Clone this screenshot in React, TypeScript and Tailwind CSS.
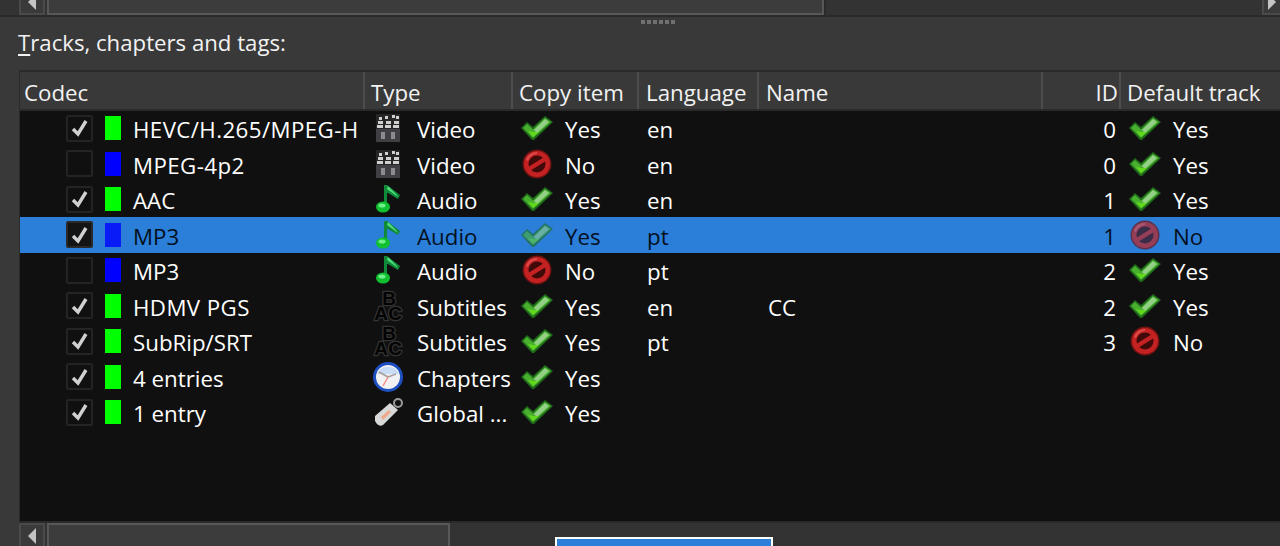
import React from 'react';

const FONT = "font-['Open_Sans','Noto_Sans',sans-serif]";

const columns = [
  { name: 'Codec', w: 'w-[345px]', align: 'pl-[4px]' },
  { name: 'Type', w: 'w-[148px]', align: 'pl-[6px]' },
  { name: 'Copy item', w: 'w-[126px]', align: 'pl-[6px]' },
  { name: 'Language', w: 'w-[120px]', align: 'pl-[7px]' },
  { name: 'Name', w: 'w-[284px]', align: 'pl-[7px]' },
  { name: 'ID', w: 'w-[78px]', align: 'justify-end pr-[1px]' },
  { name: 'Default track', w: 'flex-1', align: 'pl-[6px]' },
];

type Row = {
  on: boolean;
  color: 'green' | 'blue';
  codec: string;
  wide?: boolean;
  kind: 'video' | 'audio' | 'subs' | 'chapters' | 'tags';
  type: string;
  copy: boolean;
  lang?: string;
  name?: string;
  id?: string;
  def?: boolean;
  selected?: boolean;
};

const rows: Row[] = [
  { on: true, color: 'green', codec: 'HEVC/H.265/MPEG-H', wide: true, kind: 'video', type: 'Video', copy: true, lang: 'en', id: '0', def: true },
  { on: false, color: 'blue', codec: 'MPEG-4p2', wide: true, kind: 'video', type: 'Video', copy: false, lang: 'en', id: '0', def: true },
  { on: true, color: 'green', codec: 'AAC', kind: 'audio', type: 'Audio', copy: true, lang: 'en', id: '1', def: true },
  { on: true, color: 'blue', codec: 'MP3', kind: 'audio', type: 'Audio', copy: true, lang: 'pt', id: '1', def: false, selected: true },
  { on: false, color: 'blue', codec: 'MP3', kind: 'audio', type: 'Audio', copy: false, lang: 'pt', id: '2', def: true },
  { on: true, color: 'green', codec: 'HDMV PGS', wide: true, kind: 'subs', type: 'Subtitles', copy: true, lang: 'en', name: 'CC', id: '2', def: true },
  { on: true, color: 'green', codec: 'SubRip/SRT', kind: 'subs', type: 'Subtitles', copy: true, lang: 'pt', id: '3', def: false },
  { on: true, color: 'green', codec: '4 entries', kind: 'chapters', type: 'Chapters', copy: true },
  { on: true, color: 'green', codec: '1 entry', kind: 'tags', type: 'Global ...', copy: true },
];

function CheckIcon({ dim }: { dim?: boolean }) {
  return (
    <svg width="32" height="24" viewBox="0 0 32 24" className={dim ? 'opacity-60' : ''}>
      <path d="M0 12 L6 6 L12 11 L24 0 L32 6 L13 24 L11 24 Z" fill="#1f6a1a" />
      <path d="M2 12 L6 8 L12 13.5 L24 2 L30 6 L12 22 Z" fill="#49b02f" />
      <path d="M13 14 L24 3 L28 6 L16 17 Z" fill="#93cf85" />
      <path d="M7 15 L12 21 L18 16 L12 16 Z" fill="#62d81c" />
    </svg>
  );
}

function NoIcon({ dim }: { dim?: boolean }) {
  return (
    <svg width="30" height="30" viewBox="0 0 30 30" className={dim ? 'opacity-70' : ''}>
      <circle cx="15" cy="15" r="14.5" fill="#6e1212" />
      <circle cx="15" cy="15" r="13" fill="#c42222" />
      <path d="M4 11 A12 12 0 0 1 15 3 L15 5 A10 10 0 0 0 6 12 Z" fill="#dd4a4a" />
      <circle cx="15" cy="15" r="8.5" fill="#3f0a0a" />
      <path d="M4.5 19 L23 7.5 L25.5 11 L7 22.5 Z" fill="#c42222" />
    </svg>
  );
}

function TypeIcon({ kind }: { kind: Row['kind'] }) {
  if (kind === 'video') {
    return (
      <svg width="24" height="28" viewBox="0 0 24 28" className="blur-[0.4px]">
        <rect x="0" y="15" width="24" height="13" fill="#3f3f44" />
        <rect x="5" y="18" width="4" height="7" fill="#8c8c90" />
        <rect x="15" y="18" width="4" height="7" fill="#8c8c90" />
        <rect x="0" y="0" width="24" height="15" fill="#262626" />
        <path d="M2 7h5v3H2zM10 7h5v3h-5zM18 7h5v3h-5zM1 11h6v3H1zM9 11h6v3H9zM17 11h6v3h-6zM9 2h3v3H9zM16 1h3v3h-3zM20 2h3v3h-3zM3 3h3v3H3z" fill="#d0d0d0" />
      </svg>
    );
  }
  if (kind === 'audio') {
    return (
      <svg width="24" height="28" viewBox="0 0 24 28">
        <path d="M8 0 L11 0 L24 10 L22 14 L12 8 L11 8 L11 22 L8 22 Z" fill="#0f8a3a" />
        <path d="M11 4 L22 12 L20 9 L12 1 Z" fill="#4fdc7a" />
        <ellipse cx="7" cy="22" rx="7" ry="5.5" fill="#10c030" />
        <ellipse cx="6" cy="20.5" rx="3.5" ry="2" fill="#6ff08a" />
      </svg>
    );
  }
  if (kind === 'subs') {
    const letter = {
      textAnchor: 'middle' as const,
      fontSize: 19,
      fontWeight: 700,
      fill: '#030303',
      stroke: '#333333',
      strokeWidth: 2.5,
      paintOrder: 'stroke',
      fontFamily: 'Liberation Sans, sans-serif',
    };
    return (
      <svg width="30" height="38" viewBox="0 -4 30 38" className="shrink-0">
        <text x="16" y="14" {...letter}>B</text>
        <text x="8" y="29" {...letter}>A</text>
        <text x="22" y="29" {...letter}>C</text>
      </svg>
    );
  }
  if (kind === 'chapters') {
    return (
      <svg width="30" height="30" viewBox="0 0 30 30">
        <circle cx="15" cy="15" r="15" fill="#1d4fc0" />
        <circle cx="15" cy="15" r="12" fill="#f1f1f4" />
        <path d="M4 12a12 12 0 0 1 22 0z" fill="#c9dcf5" />
        <path d="M15 15 L6 10" stroke="#a8a0a0" strokeWidth="2" />
        <path d="M15 15 L23 12" stroke="#a8a0a0" strokeWidth="1.5" />
        <path d="M15 15 L10 24" stroke="#f09080" strokeWidth="1.5" />
      </svg>
    );
  }
  return (
    <svg width="32" height="30" viewBox="0 0 32 30">
      <path d="M3 19 L18 6 L26 13 L11 28 Q8 30 5 27 L3 24 Z" fill="#d8d8d8" />
      <path d="M9 20 L17 13 L19 15 L11 23 Z" fill="#f0a888" />
      <circle cx="26" cy="6" r="4" fill="none" stroke="#9a9a9a" strokeWidth="2" />
    </svg>
  );
}

function Arrow({ right, className = '' }: { right?: boolean; className?: string }) {
  return (
    <svg width="8" height="16" viewBox="0 0 8 16" className={`shrink-0 ${className}`}>
      <path d={right ? 'M0 0 L8 8 L0 16 Z' : 'M8 0 L0 8 L8 16 Z'} fill="#c4c4c4" />
    </svg>
  );
}

function TrackRow({ row }: { row: Row }) {
  const text = row.selected ? 'text-[#04101e]' : 'text-white';
  return (
    <div className={`flex h-[35.5px] items-center text-[22.3px] leading-none ${text} ${row.selected ? 'bg-[#2b7fd9]' : ''}`}>
      <div className="flex w-[345px] items-center pl-[46px]">
        <div className={`flex h-[27px] w-[27px] shrink-0 items-center justify-center rounded-[2px] border-2 ${row.selected ? 'border-[#2a2a2a] bg-[#141414]' : 'border-[#242424]'}`}>
          {row.on && (
            <svg width="18" height="18" viewBox="0 0 18 18">
              <path d="M2 10 L7 15 L15 2" fill="none" stroke="#d0d0d0" strokeWidth="3.4" />
            </svg>
          )}
        </div>
        <div className={`ml-[12px] h-[24px] w-[16px] shrink-0 ${row.color === 'green' ? 'bg-[#00ff00]' : row.selected ? 'bg-[#0a1cf5]' : 'bg-[#0000ff]'}`} />
        <span className={`ml-[12px] whitespace-nowrap pt-[4px] ${row.wide ? 'tracking-[0.4px]' : ''}`}>{row.codec}</span>
      </div>
      <div className="flex w-[148px] items-center">
        <div className="flex w-[52px] justify-center pr-[6px]">
          <TypeIcon kind={row.kind} />
        </div>
        <span className="whitespace-nowrap pt-[4px]">{row.type}</span>
      </div>
      <div className="flex w-[126px] items-center">
        <div className="flex w-[52px] justify-center pr-[4px]">
          {row.copy ? <CheckIcon dim={row.selected} /> : <NoIcon />}
        </div>
        <span className="pt-[4px]">{row.copy ? 'Yes' : 'No'}</span>
      </div>
      <div className="w-[120px] pl-[8px] pt-[4px]">{row.lang}</div>
      <div className="w-[284px] pl-[9px] pt-[4px]">{row.name}</div>
      <div className="w-[78px] pr-[5px] pt-[4px] text-right">{row.id}</div>
      {row.def !== undefined && (
        <div className="flex flex-1 items-center">
          <div className="flex w-[52px] justify-center pr-[4px]">
            {row.def ? <CheckIcon /> : <NoIcon dim={row.selected} />}
          </div>
          <span className="pt-[4px]">{row.def ? 'Yes' : 'No'}</span>
        </div>
      )}
    </div>
  );
}

export default function App() {
  return (
    <div className={`relative h-[546px] w-[1280px] overflow-hidden bg-[#393939] ${FONT}`}>
      <div className="flex h-[17px] border-b-2 border-[#2a2a2a] bg-[#333333] pl-[19px]">
        <div className="flex h-[15px] w-[26px] items-start justify-center overflow-hidden border-2 border-t-0 border-[#4a4a4a] bg-[#3a3a3a]">
          <Arrow className="-mt-[6px]" />
        </div>
        <div className="ml-[2px] h-[15px] w-[777px] border-2 border-t-0 border-[#585858] bg-[#3c3c3c]" />
        <div className="flex-1 border-l-2 border-[#2a2a2a]" />
        <div className="flex h-[15px] w-[18px] items-start justify-center overflow-hidden border-2 border-t-0 border-r-0 border-[#4a4a4a] bg-[#3a3a3a]">
          <Arrow right className="-mt-[6px]" />
        </div>
      </div>

      <div className="flex h-[9px] items-center justify-center gap-[2px] pl-[36px]">
        {[0, 1, 2, 3, 4, 5].map((i) => (
          <div key={i} className="h-[4px] w-[4px] bg-[#6f6f6f]" />
        ))}
      </div>

      <div className="flex h-[35px] items-center pl-[18px] text-[22.2px] leading-none text-[#f2f2f2]">
        <span>
          <span className="underline underline-offset-[3px]">T</span>racks, chapters and tags:
        </span>
      </div>

      <div className="ml-[19px] mt-[9px] flex h-[451px] flex-col border-l border-t-2 border-[#2a2a2a]">
        <div className="flex h-[38.5px] shrink-0 border-b-2 border-[#2a2a2a] bg-[#393939]">
          {columns.map((c) => (
            <div
              key={c.name}
              className={`flex items-center whitespace-nowrap border-r-2 border-[#4d4d4d] pt-[5px] text-[22.3px] leading-none text-[#f2f2f2] last:border-r-0 ${c.w} ${c.align}`}
            >
              {c.name}
            </div>
          ))}
        </div>
        <div className="flex-1 bg-[#101010]">
          {rows.map((r, i) => (
            <TrackRow key={i} row={r} />
          ))}
        </div>
      </div>

      <div className="ml-[19px] flex h-[25px] border-t-2 border-[#2a2a2a] bg-[#333333]">
        <div className="flex h-full w-[26px] items-center justify-center border-2 border-b-0 border-[#4a4a4a] bg-[#3a3a3a]">
          <Arrow />
        </div>
        <div className="ml-[2px] h-full w-[403px] border-2 border-b-0 border-[#585858] bg-[#3c3c3c]" />
      </div>

      <div className="absolute left-[555px] top-[537px] h-[12px] w-[218px] border-2 border-white bg-[#2b7fd9]" />
    </div>
  );
}
